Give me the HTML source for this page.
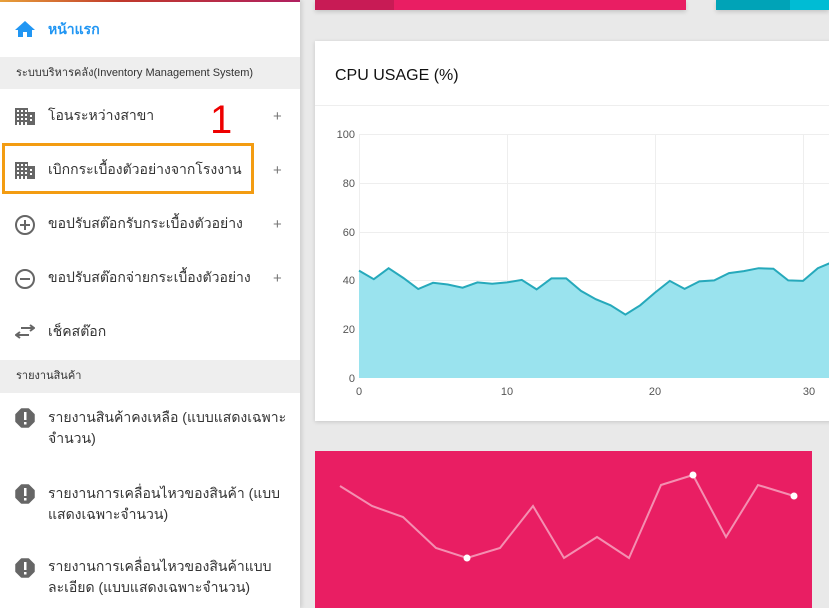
<!DOCTYPE html>
<html><head><meta charset="utf-8"><style>
*{margin:0;padding:0;box-sizing:border-box}
body{width:829px;height:608px;overflow:hidden;background:#e9e9e9;font-family:"Liberation Sans","DejaVu Sans",sans-serif;position:relative}
.sb{position:absolute;left:0;top:0;width:300px;height:608px;background:#fff;box-shadow:2px 0 4px rgba(0,0,0,.12)}
.strip{position:absolute;left:0;top:0;width:300px;height:2px;background:linear-gradient(90deg,#e8a03a,#c0392b 40%,#b02060)}
.it{position:absolute;left:0;width:300px;font-size:14px;color:#333}
.it .t{position:absolute;left:48px}
.plus{position:absolute;left:273px;top:1px;font-size:15px;color:#777}
.hd{position:absolute;left:0;width:300px;background:#eee;font-size:11px;color:#333;padding-left:16px}
svg{position:absolute}
</style></head><body>
<div class="sb">
<div class="strip"></div>
<svg style="left:14px;top:20px" width="22" height="18" viewBox="0 0 22 18"><path d="M11 1 L1 10 H4 V17 H9 V12 H13 V17 H18 V10 H21 Z" fill="#2196f3"/></svg>
<div class="it" style="top:19px"><span class="t" style="color:#2196f3;font-weight:bold;font-size:14px">หน้าแรก</span></div>
<div class="hd" style="top:57px;height:32px;line-height:32px">ระบบบริหารคลัง(Inventory Management System)</div>
<svg style="left:15px;top:108px" width="20" height="17" viewBox="0 0 20 17"><path d="M0 0H13V4H20V17H0Z" fill="#666"/><g fill="#fff"><rect x="2" y="2" width="2" height="2"/><rect x="6" y="2" width="2" height="2"/><rect x="10" y="2" width="2" height="2"/><rect x="2" y="6" width="2" height="2"/><rect x="6" y="6" width="2" height="2"/><rect x="10" y="6" width="2" height="2"/><rect x="15" y="7" width="2" height="2"/><rect x="2" y="10" width="2" height="2"/><rect x="6" y="10" width="2" height="2"/><rect x="10" y="10" width="2" height="2"/><rect x="15" y="11" width="2" height="2"/><rect x="2" y="14" width="2" height="3"/><rect x="6" y="14" width="2" height="3"/><rect x="10" y="14" width="2" height="3"/></g></svg>
<div class="it" style="top:105px"><span class="t">โอนระหว่างสาขา</span><span class="plus" style="top:3px">+</span></div>
<div style="position:absolute;left:210px;top:100px;font-size:40px;color:#e00;line-height:40px">1</div>
<div style="position:absolute;left:2px;top:143px;width:252px;height:51px;border:3px solid #f39c12"></div>
<svg style="left:15px;top:162px" width="20" height="17" viewBox="0 0 20 17"><path d="M0 0H13V4H20V17H0Z" fill="#666"/><g fill="#fff"><rect x="2" y="2" width="2" height="2"/><rect x="6" y="2" width="2" height="2"/><rect x="10" y="2" width="2" height="2"/><rect x="2" y="6" width="2" height="2"/><rect x="6" y="6" width="2" height="2"/><rect x="10" y="6" width="2" height="2"/><rect x="15" y="7" width="2" height="2"/><rect x="2" y="10" width="2" height="2"/><rect x="6" y="10" width="2" height="2"/><rect x="10" y="10" width="2" height="2"/><rect x="15" y="11" width="2" height="2"/><rect x="2" y="14" width="2" height="3"/><rect x="6" y="14" width="2" height="3"/><rect x="10" y="14" width="2" height="3"/></g></svg>
<div class="it" style="top:159px"><span class="t">เบิกกระเบื้องตัวอย่างจากโรงงาน</span><span class="plus" style="top:3px">+</span></div>
<svg style="left:14px;top:214px" width="22" height="22" viewBox="0 0 22 22"><circle cx="11" cy="11" r="9" fill="none" stroke="#666" stroke-width="2"/><path d="M11 6V16M6 11H16" stroke="#666" stroke-width="2"/></svg>
<div class="it" style="top:213px"><span class="t">ขอปรับสต๊อกรับกระเบื้องตัวอย่าง</span><span class="plus" style="top:3px">+</span></div>
<svg style="left:14px;top:268px" width="22" height="22" viewBox="0 0 22 22"><circle cx="11" cy="11" r="9" fill="none" stroke="#666" stroke-width="2"/><path d="M6 11H16" stroke="#666" stroke-width="2"/></svg>
<div class="it" style="top:267px"><span class="t">ขอปรับสต๊อกจ่ายกระเบื้องตัวอย่าง</span><span class="plus" style="top:3px">+</span></div>
<svg style="left:15px;top:324px" width="20" height="16" viewBox="0 0 20 16"><path d="M6 4H19M15 1L19 4L15 7M14 11H1M5 8L1 11L5 14" fill="none" stroke="#666" stroke-width="2"/></svg>
<div class="it" style="top:321px"><span class="t">เช็คสต๊อก</span></div>
<div class="hd" style="top:360px;height:33px;line-height:33px">รายงานสินค้า</div>
<svg style="left:15px;top:408px" width="20" height="20" viewBox="0 0 20 20"><path d="M6.5 1H13.5L19 6.5V13.5L13.5 19H6.5L1 13.5V6.5Z" fill="#666" stroke="#666" stroke-width="1.5" stroke-linejoin="round"/><rect x="9" y="4" width="2.5" height="8" fill="#fff"/><rect x="9" y="14" width="2.5" height="2.5" fill="#fff"/></svg>
<div class="it" style="top:407px;line-height:21px"><span class="t">รายงานสินค้าคงเหลือ (แบบแสดงเฉพาะ<br>จำนวน)</span></div>
<svg style="left:15px;top:484px" width="20" height="20" viewBox="0 0 20 20"><path d="M6.5 1H13.5L19 6.5V13.5L13.5 19H6.5L1 13.5V6.5Z" fill="#666" stroke="#666" stroke-width="1.5" stroke-linejoin="round"/><rect x="9" y="4" width="2.5" height="8" fill="#fff"/><rect x="9" y="14" width="2.5" height="2.5" fill="#fff"/></svg>
<div class="it" style="top:483px;line-height:21px"><span class="t">รายงานการเคลื่อนไหวของสินค้า (แบบ<br>แสดงเฉพาะจำนวน)</span></div>
<svg style="left:15px;top:558px" width="20" height="20" viewBox="0 0 20 20"><path d="M6.5 1H13.5L19 6.5V13.5L13.5 19H6.5L1 13.5V6.5Z" fill="#666" stroke="#666" stroke-width="1.5" stroke-linejoin="round"/><rect x="9" y="4" width="2.5" height="8" fill="#fff"/><rect x="9" y="14" width="2.5" height="2.5" fill="#fff"/></svg>
<div class="it" style="top:556px;line-height:21px"><span class="t">รายงานการเคลื่อนไหวของสินค้าแบบ<br>ละเอียด (แบบแสดงเฉพาะจำนวน)</span></div>
</div>

<div style="position:absolute;left:315px;top:0;width:371px;height:10px;background:#e91e63;box-shadow:0 2px 4px rgba(0,0,0,.15)"><div style="width:79px;height:10px;background:#c81b55"></div></div>
<div style="position:absolute;left:716px;top:0;width:113px;height:10px;background:#00bcd4;box-shadow:0 2px 4px rgba(0,0,0,.15)"><div style="width:74px;height:10px;background:#00a3b7"></div></div>

<div style="position:absolute;left:315px;top:41px;width:520px;height:380px;background:#fff;box-shadow:0 1px 4px rgba(0,0,0,.15)">
<div style="position:absolute;left:20px;top:26px;font-size:16px;color:#111">CPU USAGE (%)</div>
<div style="position:absolute;left:0;top:64px;width:520px;height:1px;background:#eee"></div>
</div>
<svg style="left:0;top:0" width="829" height="608">
<g stroke="#eee" stroke-width="1">
<line x1="359" y1="134.5" x2="829" y2="134.5"/><line x1="359" y1="183.5" x2="829" y2="183.5"/><line x1="359" y1="232.5" x2="829" y2="232.5"/><line x1="359" y1="280.5" x2="829" y2="280.5"/><line x1="359" y1="329.5" x2="829" y2="329.5"/>
<line x1="359.5" y1="134" x2="359.5" y2="378"/><line x1="507.5" y1="134" x2="507.5" y2="378"/><line x1="655.5" y1="134" x2="655.5" y2="378"/><line x1="803.5" y1="134" x2="803.5" y2="378"/>
</g>
<path d="M359 378 L359 270.6 373.8 279.2 388.6 268.2 403.4 278 418.2 289 433 282.8 447.8 284.5 462.6 287.7 477.4 282.4 492.2 283.8 507 282.4 521.8 279.9 536.6 289.4 551.4 278.4 566.2 278.4 581 290.9 595.8 299.2 610.6 305.3 625.4 314.6 640.2 305.3 655 292.6 669.8 280.9 684.6 288.9 699.4 281.4 714.2 280.4 729 273.1 743.8 271.1 758.6 268.2 773.4 268.7 788.2 280.4 803 280.9 817.8 268.2 832.6 262 L832.6 378Z" fill="#9ae3ee"/>
<path d="M359 270.6 373.8 279.2 388.6 268.2 403.4 278 418.2 289 433 282.8 447.8 284.5 462.6 287.7 477.4 282.4 492.2 283.8 507 282.4 521.8 279.9 536.6 289.4 551.4 278.4 566.2 278.4 581 290.9 595.8 299.2 610.6 305.3 625.4 314.6 640.2 305.3 655 292.6 669.8 280.9 684.6 288.9 699.4 281.4 714.2 280.4 729 273.1 743.8 271.1 758.6 268.2 773.4 268.7 788.2 280.4 803 280.9 817.8 268.2 832.6 262" fill="none" stroke="#26a9bb" stroke-width="2"/>
<g font-family="Liberation Sans,sans-serif" font-size="11" fill="#555" text-anchor="end">
<text x="355" y="138">100</text><text x="355" y="187">80</text><text x="355" y="236">60</text><text x="355" y="284">40</text><text x="355" y="333">20</text><text x="355" y="382">0</text>
</g>
<g font-family="Liberation Sans,sans-serif" font-size="11" fill="#555" text-anchor="middle">
<text x="359" y="395">0</text><text x="507" y="395">10</text><text x="655" y="395">20</text><text x="809" y="395">30</text>
</g>
<rect x="315" y="451" width="497" height="157" fill="#e91e63"/>
<path d="M340 486 372 506 403 517 436 548 467 558 500 548 533 506 564 558 597 537 629 558 661 485 693 475 726 537 758 485 794 496" fill="none" stroke="#f48fb1" stroke-width="2"/>
<g fill="#fff"><circle cx="467" cy="558" r="3.5"/><circle cx="693" cy="475" r="3.5"/><circle cx="794" cy="496" r="3.5"/></g>
</svg>
</body></html>
